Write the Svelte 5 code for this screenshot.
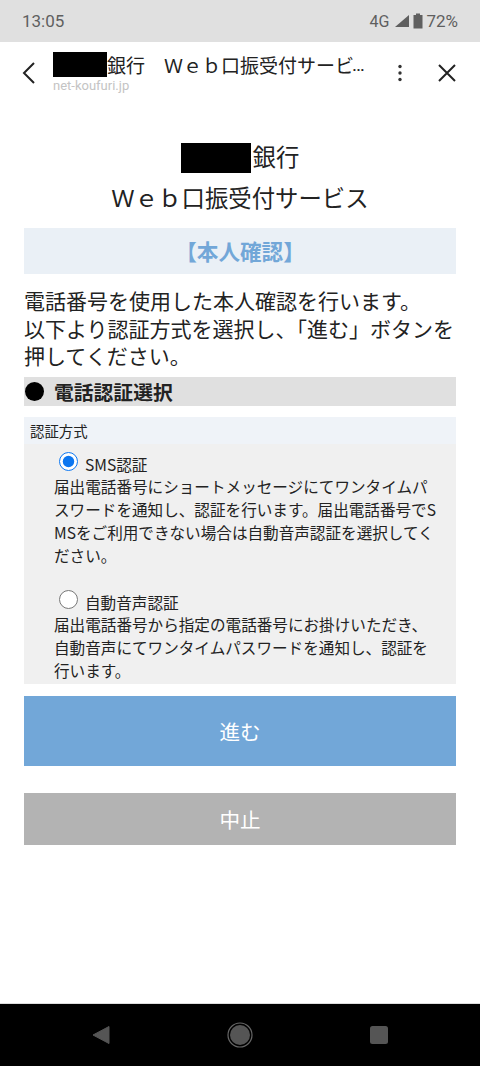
<script>
  let method = $state('sms');
</script>

<div class="screen">
  <div class="status">
    <span class="time">13:05</span>
    <div class="status-right">
      <span>4G</span>
      <svg width="16" height="14" viewBox="0 0 16 14"><path d="M15 1V13H1Z" fill="#5f5f5f" /></svg>
      <svg class="batt" width="10" height="16" viewBox="0 0 10 16"><path d="M3 0.5H7V2H9.5V15.5H0.5V2H3Z" fill="#5f5f5f" /></svg>
      <span>72%</span>
    </div>
  </div>

  <header class="toolbar">
    <svg class="back" width="16" height="24" viewBox="0 0 16 24"><path d="M13 2L3 12L13 22" fill="none" stroke="#222" stroke-width="2" /></svg>
    <div class="titles">
      <div class="page-title"><span class="mask"></span><span>銀行　Ｗｅｂ口振受付サービ</span><span class="dots">…</span></div>
      <div class="domain">net-koufuri.jp</div>
    </div>
    <svg class="more" width="6" height="18" viewBox="0 0 6 18"><circle cx="3" cy="2.5" r="1.7" fill="#333" /><circle cx="3" cy="9" r="1.7" fill="#333" /><circle cx="3" cy="15.5" r="1.7" fill="#333" /></svg>
    <svg class="close" width="20" height="20" viewBox="0 0 20 20"><path d="M2 2L18 18M18 2L2 18" stroke="#222" stroke-width="2" /></svg>
  </header>

  <main class="content">
    <div class="bank"><span class="mask big"></span>銀行</div>
    <h1 class="service">Ｗｅｂ口振受付サービス</h1>
    <div class="banner">【本人確認】</div>
    <p class="lead">電話番号を使用した本人確認を行います。<br />以下より認証方式を選択し、「進む」ボタンを押してください。</p>
    <div class="section"><span class="dot"></span>電話認証選択</div>

    <div class="panel">
      <div class="panel-head">認証方式</div>
      <div class="panel-body">
        <label class="opt">
          <input type="radio" bind:group={method} value="sms" />
          <span>SMS認証</span>
        </label>
        <p class="desc">届出電話番号にショートメッセージにてワンタイムパスワードを通知し、認証を行います。届出電話番号でSMSをご利用できない場合は自動音声認証を選択してください。</p>
        <label class="opt second">
          <input type="radio" bind:group={method} value="voice" />
          <span>自動音声認証</span>
        </label>
        <p class="desc">届出電話番号から指定の電話番号にお掛けいただき、自動音声にてワンタイムパスワードを通知し、認証を行います。</p>
      </div>
    </div>

    <button class="btn next">進む</button>
    <button class="btn stop">中止</button>
  </main>

  <nav class="navbar">
    <svg width="18" height="20" viewBox="0 0 18 20"><path d="M17 1.5V18.5L1 10Z" fill="#555" stroke="#555" stroke-linejoin="round" /></svg>
    <svg width="26" height="26" viewBox="0 0 26 26"><circle cx="13" cy="13" r="12" fill="none" stroke="#666" stroke-width="1.2" /><circle cx="13" cy="13" r="10" fill="#555" /></svg>
    <svg width="18" height="18" viewBox="0 0 18 18"><rect width="18" height="18" rx="2.5" fill="#555" /></svg>
  </nav>
</div>

<style>
  :global(body){
    margin:0;
    background:#fff;
  }
  .screen{
    width:480px;
    height:1066px;
    display:flex;
    flex-direction:column;
    font-family:"Noto Sans CJK JP", Roboto, sans-serif;
    color:#222;
    overflow:hidden;
  }
  .status{
    height:42px;
    flex:none;
    background:#e0e0e0;
    display:flex;
    justify-content:space-between;
    align-items:center;
    padding:0 22px;
    color:#5f5f5f;
    font-family:Roboto, sans-serif;
  }
  .time{
    font-size:17px;
  }
  .status-right{
    display:flex;
    align-items:center;
    gap:3px;
    font-size:17px;
  }
  .status-right span:first-child{
    font-size:16px;
    margin-right:2px;
  }
  .toolbar{
    height:62px;
    flex:none;
    display:flex;
    align-items:center;
    padding:0 23px 0 21px;
  }
  .back{
    flex:none;
  }
  .titles{
    width:320px;
    margin-left:16px;
    flex:none;
  }
  .page-title{
    display:flex;
    align-items:center;
    font-size:19px;
    line-height:26px;
    white-space:nowrap;
    margin-top:-2px;
  }
  .dots{
    font-family:Roboto, sans-serif;
    font-size:19px;
    margin-left:-2px;
  }
  .mask{
    display:inline-block;
    width:54px;
    height:25px;
    background:#000;
  }
  .mask.big{
    width:70px;
    height:30px;
    margin:4px 2px 0 0;
  }
  .domain{
    font-family:Roboto, sans-serif;
    font-size:13px;
    line-height:15px;
    color:#c4c4c4;
  }
  .more{
    margin-left:24px;
    flex:none;
  }
  .close{
    margin-left:auto;
    flex:none;
  }
  .content{
    flex:1;
    padding:0 24px;
  }
  .bank{
    margin-top:33px;
    height:38px;
    display:flex;
    justify-content:center;
    align-items:center;
    font-size:23.4px;
  }
  .service{
    margin:3px 0 0;
    font-size:23.4px;
    line-height:38px;
    font-weight:400;
    text-align:center;
  }
  .banner{
    margin-top:12px;
    height:46px;
    background:#eaf0f6;
    color:#72a7d8;
    font-size:21.6px;
    font-weight:700;
    line-height:45px;
    text-align:center;
  }
  .lead{
    margin:13px 0 0;
    font-size:21px;
    line-height:27.5px;
  }
  .section{
    margin-top:7.5px;
    height:29px;
    background:#e0e0e0;
    display:flex;
    align-items:center;
    font-size:19.8px;
    font-weight:700;
  }
  .dot{
    width:19px;
    height:19px;
    border-radius:50%;
    background:#000;
    margin:0 10px 0 1px;
  }
  .panel{
    margin-top:11px;
  }
  .panel-head{
    height:27px;
    line-height:28px;
    background:#eff3f8;
    padding-left:6px;
    font-size:14.4px;
  }
  .panel-body{
    background:#f0f0f0;
    padding:5px 17px 0 30px;
    height:240px;
    box-sizing:border-box;
  }
  .opt{
    display:flex;
    align-items:center;
    height:26px;
    font-size:15.6px;
  }
  .opt span{
    margin-left:7px;
    margin-top:4px;
  }
  .opt input{
    width:19px;
    height:19px;
    margin:-2px 0 0 5px;
    accent-color:#0b76f0;
  }
  .opt.second{
    margin-top:20px;
  }
  .desc{
    margin:0;
    font-size:15.6px;
    line-height:23px;
    word-break:break-all;
  }
  .btn{
    display:block;
    width:100%;
    border:none;
    color:#fff;
    font-family:inherit;
    font-size:20.6px;
  }
  .next{
    margin-top:12px;
    height:70px;
    background:#72a7d8;
  }
  .stop{
    margin-top:27px;
    height:52px;
    background:#b3b3b3;
  }
  .navbar{
    height:63px;
    flex:none;
    background:#000;
    border-top:1px solid #ddd;
    box-sizing:border-box;
    display:flex;
    align-items:center;
    justify-content:space-between;
    padding:0 92px;
  }
</style>
